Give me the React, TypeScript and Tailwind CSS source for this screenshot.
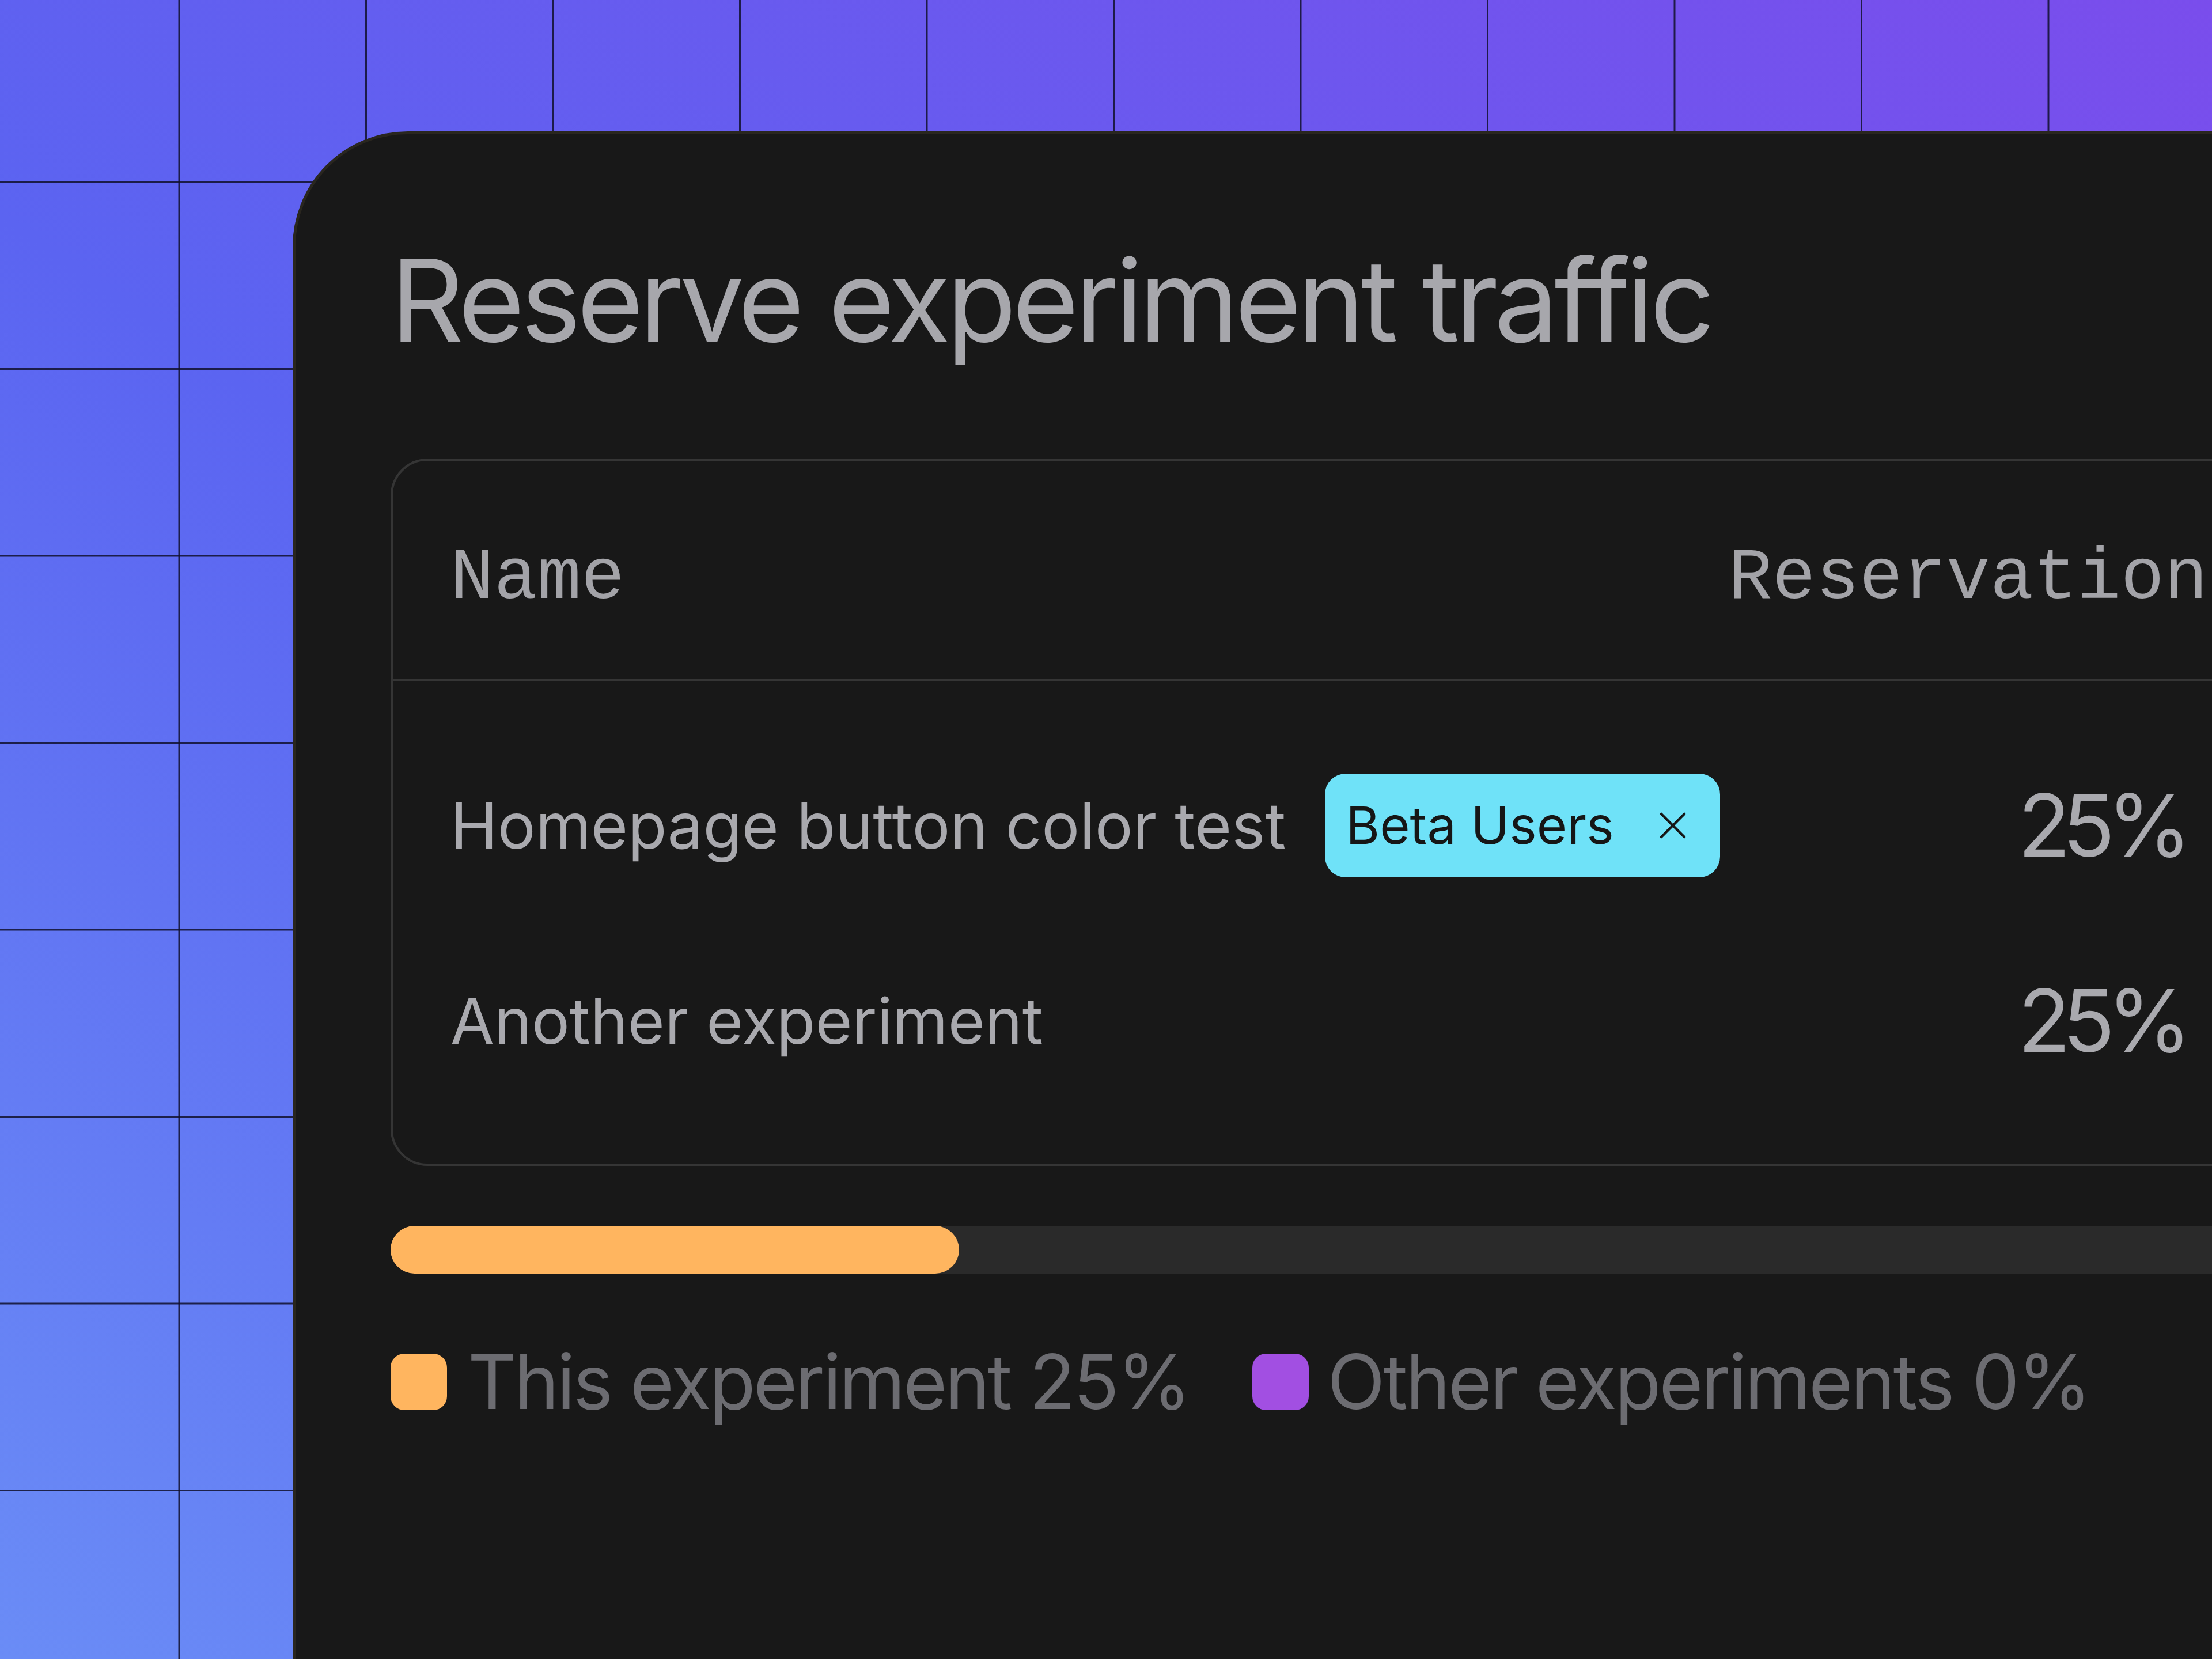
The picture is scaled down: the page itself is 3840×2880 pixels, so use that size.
const sans = "font-['Inter','Liberation_Sans',sans-serif]";
const mono = "font-['Liberation_Mono',monospace]";

const rows = [
  { name: "Homepage button color test", tag: "Beta Users", value: "25%" },
  { name: "Another experiment", value: "25%" },
];

function CloseIcon() {
  return (
    <svg width="48" height="48" viewBox="0 0 48 48" fill="none" stroke="#161616" strokeWidth="4.5" strokeLinecap="round">
      <path d="M4 4L44 44M44 4L4 44" />
    </svg>
  );
}

export default function App() {
  return (
    <div className="h-[2880px] w-[3840px] overflow-hidden bg-[#5f6cf2] [background-image:linear-gradient(to_right,rgba(16,16,44,0.85)_3px,transparent_3px),linear-gradient(to_bottom,rgba(16,16,44,0.85)_3px,transparent_3px),linear-gradient(35deg,#6a8cf6_0%,#5b64f1_45%,#7a4dec_100%)] [background-position:309.5px_0,0_314.5px,0_0] [background-size:324.5px_324.5px,324.5px_324.5px,100%_100%]">
      <div className="pl-[508px] pt-[228px]">
        <div className="h-[2800px] w-[3600px] rounded-tl-[200px] border-[5px] border-[#29261f] bg-[#181818] pl-[165px] pt-[189px]">
          <h1 className={`${sans} text-[198px] leading-none font-normal tracking-[-7px] text-[#a7a7ac]`}>
            Reserve experiment traffic
          </h1>

          <div className="mt-[176px] w-[3300px] rounded-l-[64px] border-4 border-[#353535]">
            <div className={`${mono} grid h-[383px] grid-cols-[2219px_790px] items-center border-b-4 border-[#353535] pt-[30px] pl-[100px] text-[126px] leading-none text-[#a3a3a8]`}>
              <div>Name</div>
              <div>Reservation</div>
            </div>
            <div className="pt-[80px] pb-[79px]">
              {rows.map((r) => (
                <div key={r.name} className={`${sans} grid h-[339px] grid-cols-[2219px_790px] items-center pl-[100px] text-[#a9a9ae]`}>
                  <div className="flex items-center">
                    <span className="text-[110px] leading-none">{r.name}</span>
                    {r.tag && (
                      <span className="ml-[68px] flex h-[180px] w-[686px] items-center justify-between rounded-[36px] bg-[#6fe2f8] pl-[36px] pr-[58px]">
                        <span className="text-[90px] leading-none text-[#161616]">{r.tag}</span>
                        <CloseIcon />
                      </span>
                    )}
                  </div>
                  <div className="text-right text-[150px] leading-none tracking-[-14px]">{r.value}</div>
                </div>
              ))}
            </div>
          </div>

          <div className="mt-[104px] h-[83px] w-[3300px] rounded-full bg-[#2a2a2a]">
            <div className="h-full w-[987px] rounded-full bg-[#ffb55f]" />
          </div>

          <div className={`${sans} mt-[122px] flex items-center text-[131px] leading-none tracking-[-3.6px] text-[#6c6c71]`}>
            <span className="h-[98px] w-[98px] rounded-[24px] bg-[#ffb55f]" />
            <span className="ml-[36px]">This experiment 25%</span>
            <span className="ml-[110px] h-[98px] w-[98px] rounded-[24px] bg-[#a24fe2]" />
            <span className="ml-[32px]">Other experiments 0%</span>
          </div>
        </div>
      </div>
    </div>
  );
}
